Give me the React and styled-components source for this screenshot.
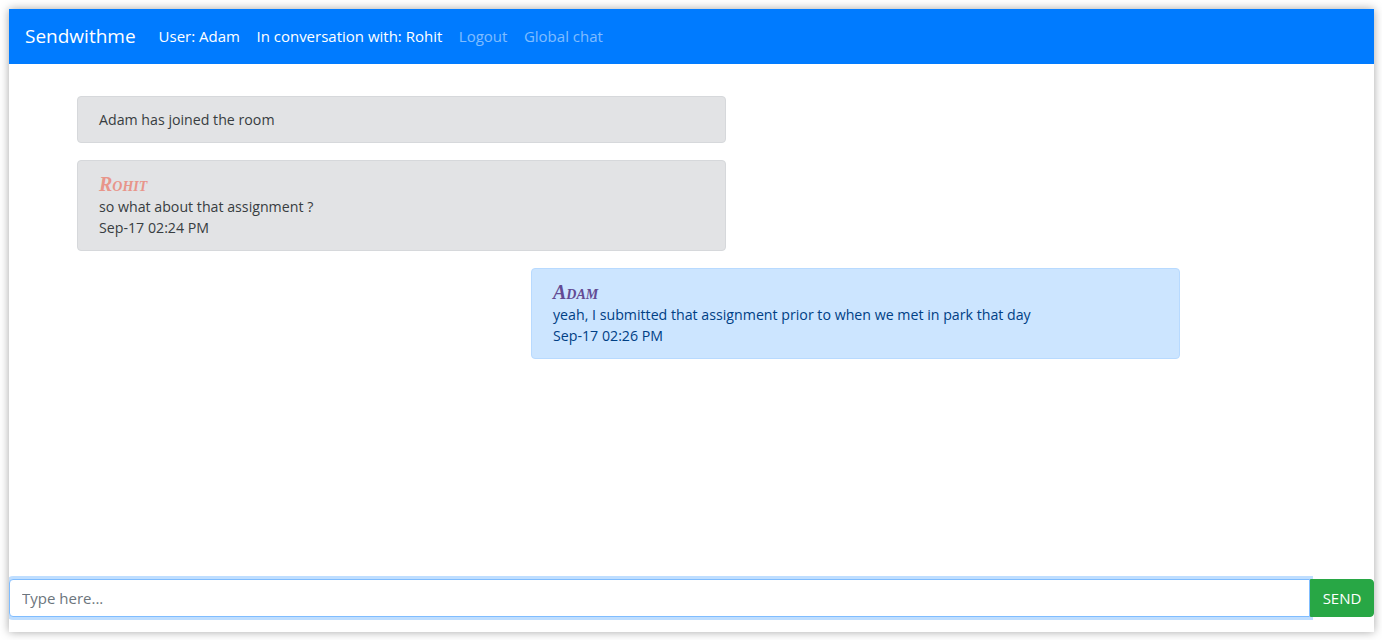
import React from "react";
import styled, { createGlobalStyle } from "styled-components";

const Global = createGlobalStyle`
  html, body { margin: 0; padding: 0; background: #fff; }
  body { font-family: "Open Sans", "Noto Sans", sans-serif; }
  * { box-sizing: border-box; }
`;

const Frame = styled.div`
  margin: 9px 8px 8px 9px;
  height: 623px;
  display: flex;
  flex-direction: column;
  background: #fff;
  box-shadow: 0 0 9px rgba(0, 0, 0, 0.35);
  overflow: hidden;
`;

const Navbar = styled.nav`
  height: 55px;
  flex: none;
  background: #007bff;
  display: flex;
  align-items: center;
  padding: 0 16px 2px;
`;

const Brand = styled.span`
  font-size: 19px;
  color: #fff;
  margin-right: 23px;
`;

const NavItem = styled.span`
  font-size: 15px;
  color: ${(p) => (p.$muted ? "rgba(255,255,255,0.5)" : "#fff")};
  margin-right: 16.5px;
`;

const Messages = styled.div`
  flex: 1;
  display: flex;
  flex-direction: column;
  gap: 17px;
  padding: 32px 0 0 68px;
`;

const Bubble = styled.div`
  width: 649px;
  margin-left: ${(p) => (p.$mine ? "454px" : "0")};
  padding: 12px 21px;
  border-radius: 4px;
  border: 1px solid ${(p) => (p.$mine ? "#b8daff" : "#d6d8db")};
  background: ${(p) => (p.$mine ? "#cce5ff" : "#e2e3e5")};
  color: ${(p) => (p.$mine ? "#004085" : "#383d41")};
  font-size: 14.2px;
  line-height: 21px;
`;

const Name = styled.div`
  font-family: "Liberation Serif", "DejaVu Serif", serif;
  font-weight: bold;
  font-style: italic;
  font-variant: small-caps;
  font-size: 20px;
  line-height: 23px;
  color: ${(p) => p.$color};
`;

const InputRow = styled.div`
  flex: none;
  display: flex;
  padding-bottom: 15px;
`;

const Input = styled.input`
  flex: 1;
  height: 38px;
  padding: 6px 12px;
  font-family: inherit;
  font-size: 15px;
  color: #495057;
  border: 1px solid #80bdff;
  border-radius: 4px 0 0 4px;
  outline: none;
  box-shadow: 0 0 0 3px rgba(0, 123, 255, 0.25);
  &::placeholder { color: #6c757d; }
`;

const SendButton = styled.button`
  width: 64px;
  height: 38px;
  border: 1px solid #28a745;
  background: #28a745;
  color: #fff;
  font-family: inherit;
  font-size: 15px;
  border-radius: 0 4px 4px 0;
  padding: 0;
  position: relative;
  z-index: 1;
`;

export default function App() {
  return (
    <>
      <Global />
      <Frame>
        <Navbar>
          <Brand>Sendwithme</Brand>
          <NavItem>User: Adam</NavItem>
          <NavItem>In conversation with: Rohit</NavItem>
          <NavItem $muted>Logout</NavItem>
          <NavItem $muted>Global chat</NavItem>
        </Navbar>
        <Messages>
          <Bubble>Adam has joined the room</Bubble>
          <Bubble>
            <Name $color="#e8958a">Rohit</Name>
            <div>so what about that assignment ?</div>
            <div>Sep-17 02:24 PM</div>
          </Bubble>
          <Bubble $mine>
            <Name $color="#634b94">Adam</Name>
            <div>yeah, I submitted that assignment prior to when we met in park that day</div>
            <div>Sep-17 02:26 PM</div>
          </Bubble>
        </Messages>
        <InputRow>
          <Input placeholder="Type here..." autoFocus />
          <SendButton>SEND</SendButton>
        </InputRow>
      </Frame>
    </>
  );
}
